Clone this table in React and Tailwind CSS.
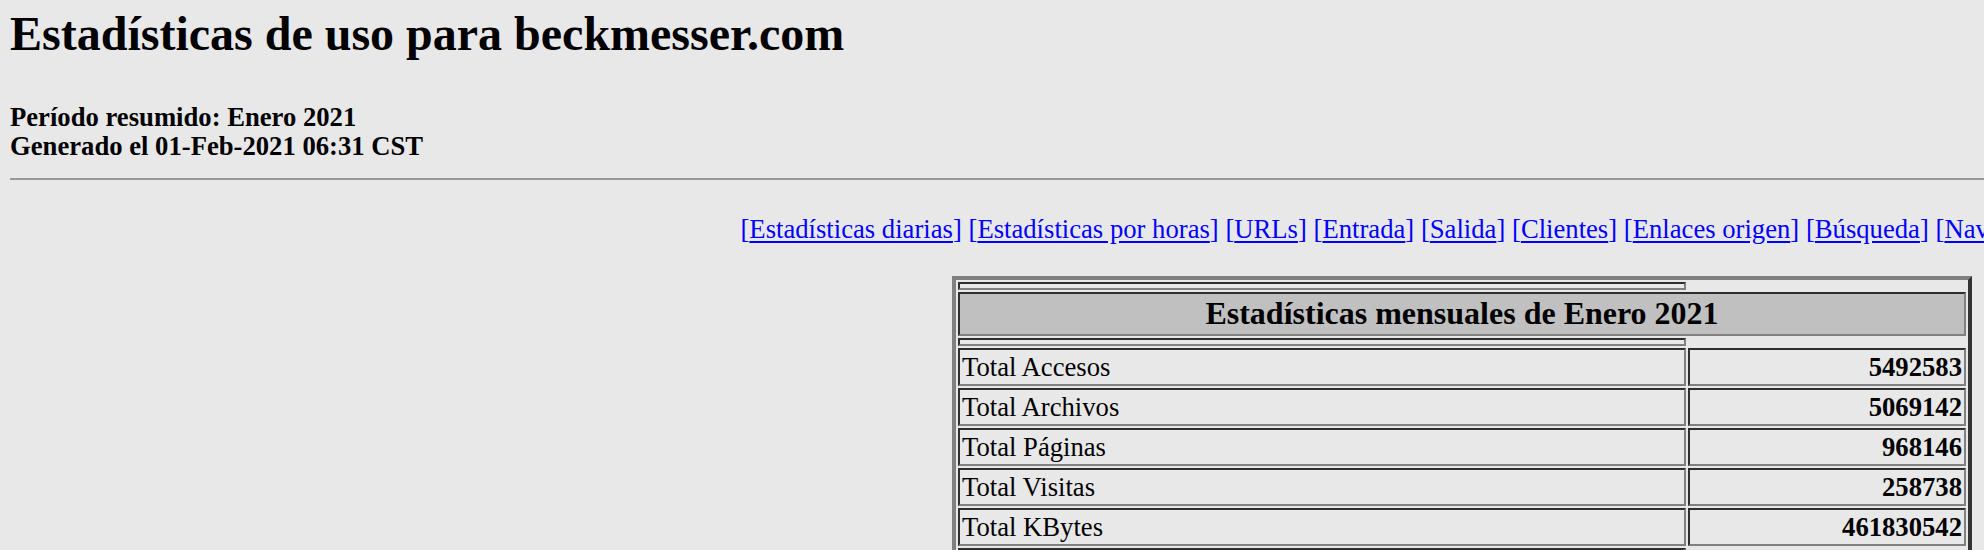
const links = [
  "Estadísticas diarias",
  "Estadísticas por horas",
  "URLs",
  "Entrada",
  "Salida",
  "Clientes",
  "Enlaces origen",
  "Búsqueda",
  "Navegadores",
  "Países",
];

const totals = [
  ["Total Accesos", "5492583"],
  ["Total Archivos", "5069142"],
  ["Total Páginas", "968146"],
  ["Total Visitas", "258738"],
  ["Total KBytes", "461830542"],
];

// inset cell border, like an old html table with border=2
const cell =
  "border-2 border-t-[#2e2e2e] border-l-[#2e2e2e] border-b-[#808080] border-r-[#808080]";

function Spacer() {
  return (
    <>
      <div className={`${cell} h-[8px]`} />
      <div />
    </>
  );
}

export default function App() {
  return (
    <div className="min-h-screen w-full overflow-hidden bg-[#e8e8e8] font-['Liberation_Serif',serif] text-black">
      <div className="w-[2914px] pl-[10px] pt-[7px] pb-10">
        <h2 className="text-[48px] font-bold leading-[53px]">
          Estadísticas de uso para beckmesser.com
        </h2>
        <div className="mt-[42.5px] text-[26.67px] font-bold leading-[29px]">
          <div>Período resumido: Enero 2021</div>
          <div>Generado el 01-Feb-2021 06:31 CST</div>
        </div>
        <div className="mt-[17.5px] h-[2px] bg-[#999999]" />

        <div className="mt-[35px] text-center text-[26.67px] leading-[29px] text-[#0000ff]">
          {links.map((l, i) => (
            <span key={l}>
              {i > 0 ? " " : ""}[<span className="underline underline-offset-[3px]">{l}</span>]
            </span>
          ))}
        </div>

        <div className="mt-[32px] flex justify-center">
          <div className="w-[1020px] border-4 border-t-[#808080] border-l-[#808080] border-b-[#333333] border-r-[#333333] p-[2px]">
            <div className="grid grid-cols-[728px_278px] gap-[2px]">
              <Spacer />
              <div
                className={`${cell} col-span-2 bg-[#c0c0c0] p-[2px] text-center text-[32px] font-bold leading-[35.5px]`}
              >
                Estadísticas mensuales de Enero 2021
              </div>
              <Spacer />
              {totals.map(([label, value]) => (
                <div key={label} className="contents">
                  <div className={`${cell} p-[2px] text-[26.67px] leading-[30px]`}>
                    {label}
                  </div>
                  <div
                    className={`${cell} p-[2px] text-right text-[26.67px] font-bold leading-[30px]`}
                  >
                    {value}
                  </div>
                </div>
              ))}
              <Spacer />
            </div>
          </div>
        </div>
      </div>
    </div>
  );
}
